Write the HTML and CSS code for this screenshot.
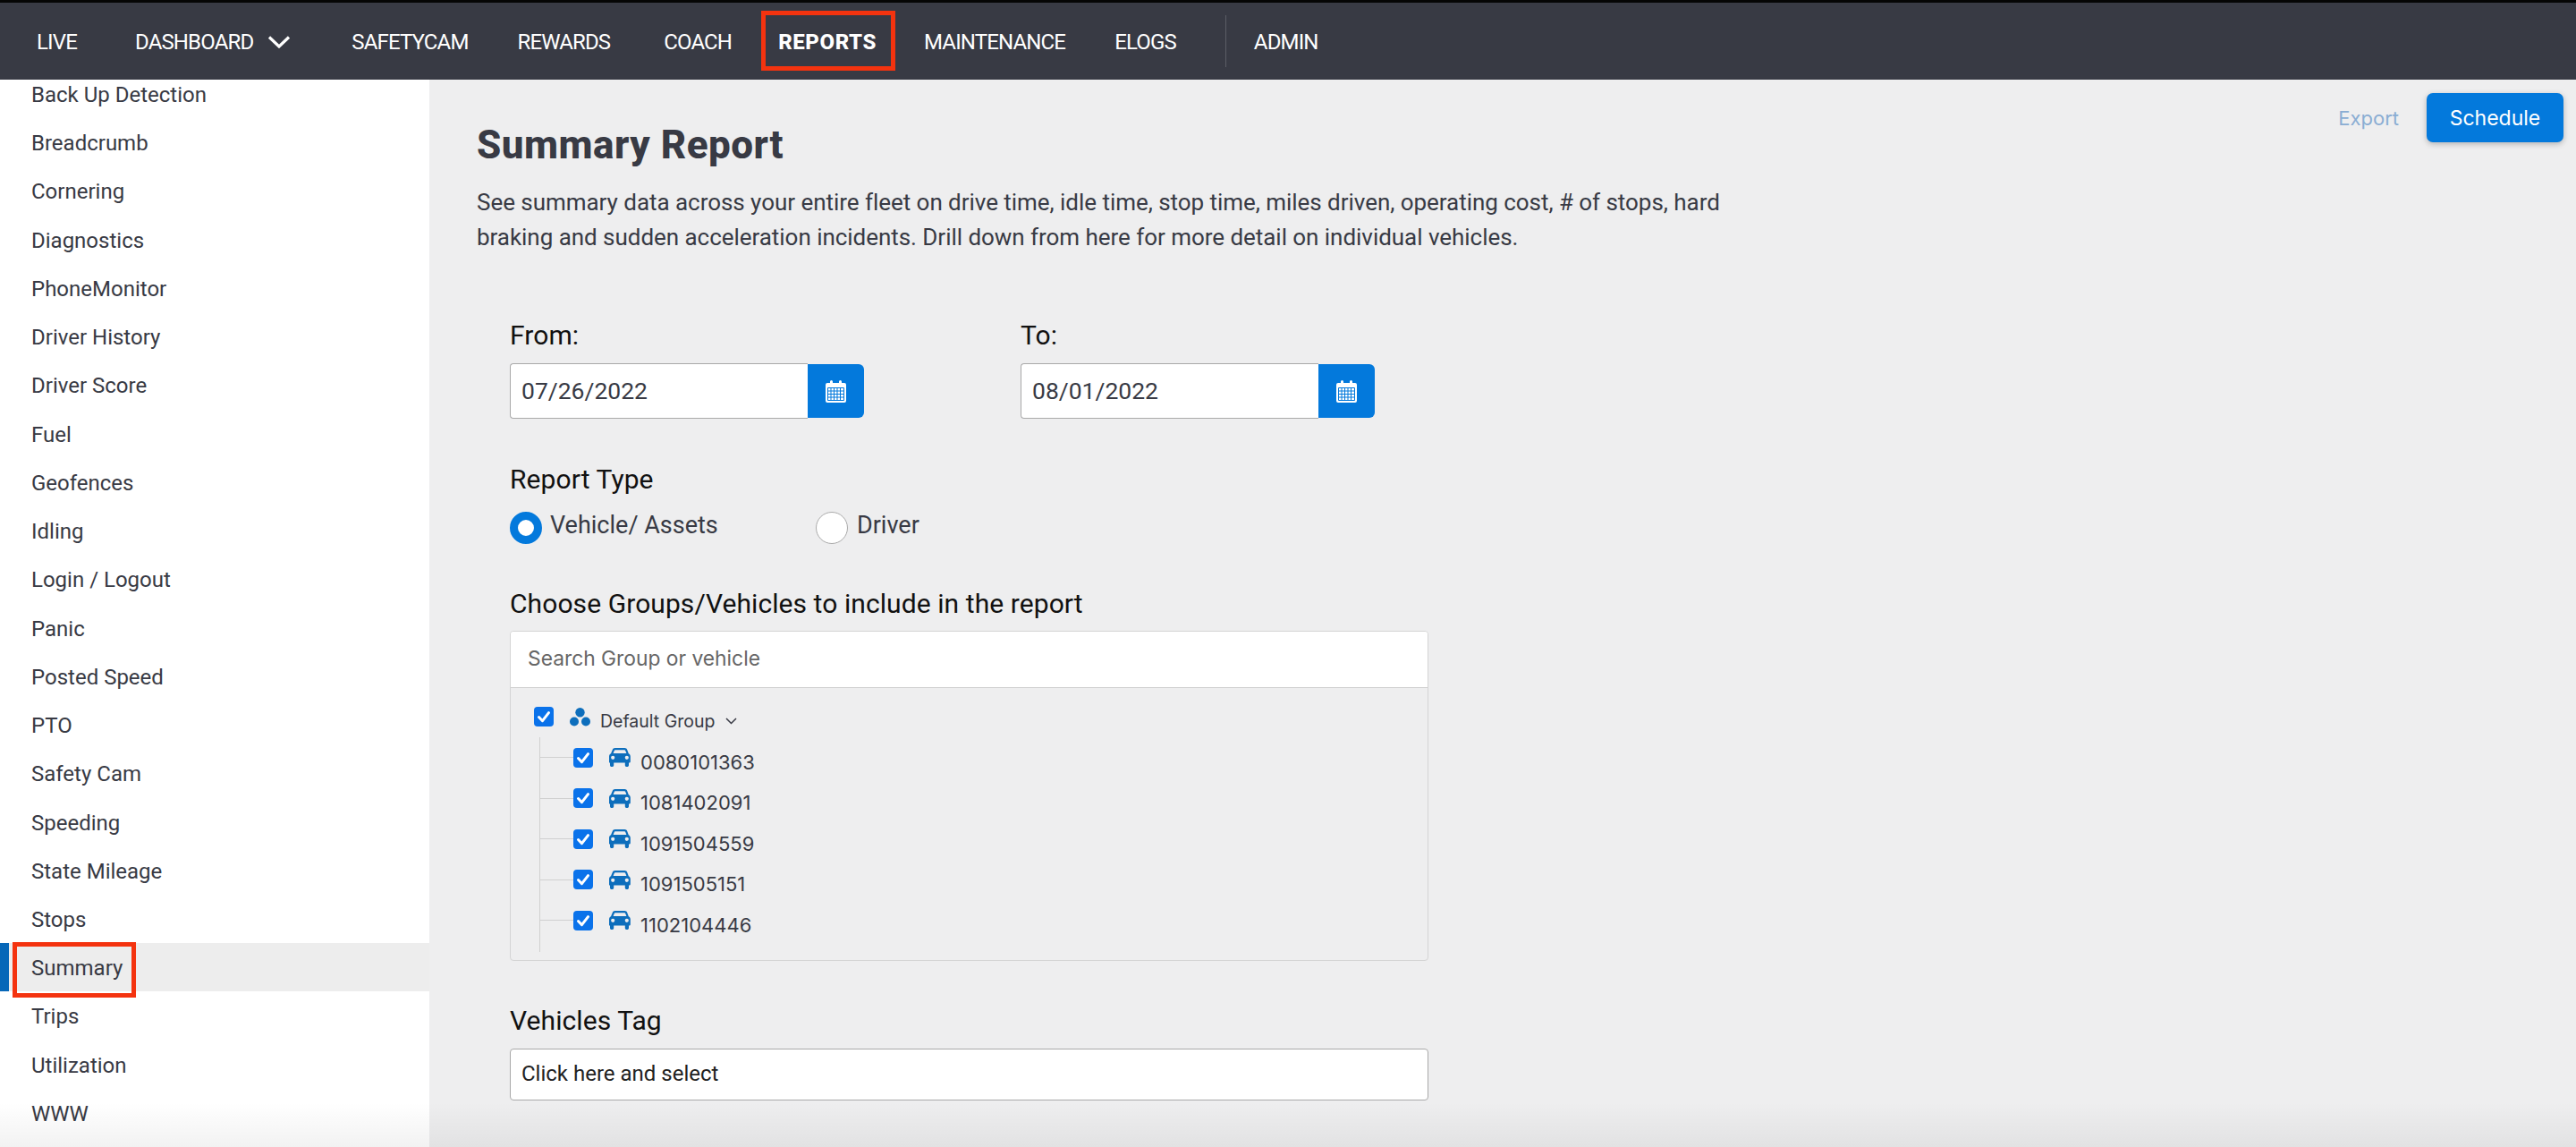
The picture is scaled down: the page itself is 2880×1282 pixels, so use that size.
FILE: index.html
```html
<!DOCTYPE html>
<html lang="en">
<head>
<meta charset="utf-8">
<title>Summary Report</title>
<link rel="stylesheet" href="styles.css">
</head>
<body>
<svg class="defs" width="0" height="0" aria-hidden="true">
  <symbol id="check" viewBox="0 0 22 22"><path d="M5.5 11.5l4 4.2 7-9" fill="none" stroke="#fff" stroke-width="3" stroke-linecap="round" stroke-linejoin="round"/></symbol>
  <symbol id="car" viewBox="0 0 24 21"><path fill-rule="evenodd" d="M6.6 0h10.8c1.3 0 2.3.7 2.8 1.9l1.6 4.4c1.2.6 2 1.8 2 3.2v5.7c0 .8-.6 1.4-1.4 1.4h-.4v2.6c0 1-.8 1.8-1.8 1.8h-.6c-1 0-1.8-.8-1.8-1.8v-2.6H5.2v2.6c0 1-.8 1.8-1.8 1.8h-.6c-1 0-1.8-.8-1.8-1.8v-2.6h-.4C-.2 16.600 0 16 0 15.200V9.500c0-1.400.8-2.600 2-3.200l1.800-4.400C4.300.7 5.300 0 6.600 0zM6.800 2.200c-.5 0-.9.300-1 .7L4.600 6.100h14.800l-1.200-3.200c-.1-.4-.5-.7-1-.7H6.800zM4.200 8.700a2.100 2.100 0 1 0 0 4.200 2.100 2.100 0 0 0 0-4.200zm15.600 0a2.100 2.100 0 1 0 0 4.200 2.100 2.100 0 0 0 0-4.200z"/></symbol>
  <symbol id="cal" viewBox="0 0 23 26"><path fill="#fff" d="M2 4h3V2.500a1.500 1.500 0 0 1 3 0V4h7V2.500a1.500 1.500 0 0 1 3 0V4h3a2 2 0 0 1 2 2v18a2 2 0 0 1-2 2H2a2 2 0 0 1-2-2V6a2 2 0 0 1 2-2z"/><path fill="none" stroke="#0379dc" stroke-width="1" d="M2.500 9.500h18v14h-18zM2.500 13h18M2.500 16.500h18M2.500 20h18M6 9.500v14M9.500 9.500v14M13 9.500v14M16.500 9.500v14"/></symbol>
</svg>

<header class="topbar">
  <a class="nav-item nav-live">LIVE</a>
  <a class="nav-item nav-dash">DASHBOARD
    <svg class="nav-chevron" viewBox="0 0 26 14" width="26" height="14"><path d="M2 1.500l11 10.500L24 1.500" fill="none" stroke="#fff" stroke-width="3.200"/></svg>
  </a>
  <a class="nav-item">SAFETYCAM</a>
  <a class="nav-item nav-rewards">REWARDS</a>
  <a class="nav-item nav-coach">COACH</a>
  <a class="nav-item nav-reports">REPORTS<span class="redbox redbox-nav"></span></a>
  <a class="nav-item">MAINTENANCE</a>
  <a class="nav-item">ELOGS</a>
  <span class="nav-divider"></span>
  <a class="nav-item">ADMIN</a>
</header>

<div class="body-row">
  <aside class="sidebar">
    <ul class="side-list">
      <li class="side-item">Back Up Detection</li>
      <li class="side-item">Breadcrumb</li>
      <li class="side-item">Cornering</li>
      <li class="side-item">Diagnostics</li>
      <li class="side-item">PhoneMonitor</li>
      <li class="side-item">Driver History</li>
      <li class="side-item">Driver Score</li>
      <li class="side-item">Fuel</li>
      <li class="side-item">Geofences</li>
      <li class="side-item">Idling</li>
      <li class="side-item">Login / Logout</li>
      <li class="side-item">Panic</li>
      <li class="side-item">Posted Speed</li>
      <li class="side-item">PTO</li>
      <li class="side-item">Safety Cam</li>
      <li class="side-item">Speeding</li>
      <li class="side-item">State Mileage</li>
      <li class="side-item">Stops</li>
      <li class="side-item side-active">Summary<span class="redbox redbox-side"></span></li>
      <li class="side-item">Trips</li>
      <li class="side-item">Utilization</li>
      <li class="side-item">WWW</li>
    </ul>
  </aside>

  <main class="content">
    <div class="page-head">
      <div class="page-intro">
        <h1 class="page-title">Summary Report</h1>
        <p class="page-desc">See summary data across your entire fleet on drive time, idle time, stop time, miles driven, operating cost, # of stops, hard<br>braking and sudden acceleration incidents. Drill down from here for more detail on individual vehicles.</p>
      </div>
      <div class="page-actions">
        <a class="export-link">Export</a>
        <button class="schedule-btn" type="button">Schedule</button>
      </div>
    </div>

    <form class="report-form">
      <div class="date-row">
        <div class="date-col">
          <div class="field-label">From:</div>
          <div class="date-field">
            <div class="date-input">07/26/2022</div>
            <div class="date-btn"><svg width="23" height="26"><use href="#cal"/></svg></div>
          </div>
        </div>
        <div class="date-col">
          <div class="field-label">To:</div>
          <div class="date-field">
            <div class="date-input">08/01/2022</div>
            <div class="date-btn"><svg width="23" height="26"><use href="#cal"/></svg></div>
          </div>
        </div>
      </div>

      <div class="field-label label-spaced">Report Type</div>
      <div class="radio-row">
        <div class="radio-opt radio-opt-first"><span class="radio radio-on"></span><span class="radio-text">Vehicle/ Assets</span></div>
        <div class="radio-opt"><span class="radio"></span><span class="radio-text">Driver</span></div>
      </div>

      <div class="field-label label-spaced">Choose Groups/Vehicles to include in the report</div>
      <div class="tree-panel">
        <div class="tree-search">Search Group or vehicle</div>
        <div class="tree-body">
          <div class="tree-group">
            <span class="cb"><svg width="22" height="22"><use href="#check"/></svg></span>
            <svg class="group-icon" viewBox="0 0 23 21" width="23" height="21"><circle cx="11.500" cy="5.200" r="5.200"/><circle cx="5" cy="15.500" r="5"/><circle cx="18" cy="15.500" r="5"/></svg>
            <span class="group-name">Default Group</span>
            <svg class="group-chevron" viewBox="0 0 13 8" width="13" height="8"><path d="M1 1l5.500 5.500L12 1" fill="none" stroke="#383a44" stroke-width="1.500"/></svg>
          </div>
          <ul class="tree-list">
            <li class="tree-row"><span class="branch"></span><span class="cb"><svg width="22" height="22"><use href="#check"/></svg></span><svg class="car-icon" width="24" height="21"><use href="#car"/></svg><span class="veh-id">0080101363</span></li>
            <li class="tree-row"><span class="branch"></span><span class="cb"><svg width="22" height="22"><use href="#check"/></svg></span><svg class="car-icon" width="24" height="21"><use href="#car"/></svg><span class="veh-id">1081402091</span></li>
            <li class="tree-row"><span class="branch"></span><span class="cb"><svg width="22" height="22"><use href="#check"/></svg></span><svg class="car-icon" width="24" height="21"><use href="#car"/></svg><span class="veh-id">1091504559</span></li>
            <li class="tree-row"><span class="branch"></span><span class="cb"><svg width="22" height="22"><use href="#check"/></svg></span><svg class="car-icon" width="24" height="21"><use href="#car"/></svg><span class="veh-id">1091505151</span></li>
            <li class="tree-row"><span class="branch"></span><span class="cb"><svg width="22" height="22"><use href="#check"/></svg></span><svg class="car-icon" width="24" height="21"><use href="#car"/></svg><span class="veh-id">1102104446</span></li>
          </ul>
        </div>
      </div>

      <div class="field-label label-spaced">Vehicles Tag</div>
      <div class="tag-input">Click here and select</div>
    </form>
  </main>
</div>
<div class="bottom-fade"></div>
</body>
</html>
```

FILE: styles.css
```css
* { box-sizing: border-box; }
html, body { margin: 0; padding: 0; height: 100%; }
body {
  height: 1282px;
  overflow: hidden;
  display: flex;
  flex-direction: column;
  position: relative;
  background: #eeeeef;
  color: #383a44;
  font-family: Roboto, "Liberation Sans", sans-serif;
}
.defs { position: absolute; }

/* top bar */
.topbar {
  flex: none;
  height: 89px;
  border-top: 3px solid #050505;
  background: #383a44;
  display: flex;
  align-items: center;
  padding-left: 41px;
}
.nav-item {
  position: relative;
  display: flex;
  align-items: center;
  color: #fff;
  font-size: 24px;
  line-height: 30px;
  letter-spacing: -0.85px;
  margin: 1px 55px 0 0;
}
.nav-live { margin-right: 65px; }
.nav-dash { margin-right: 68px; }
.nav-chevron { margin-left: 16px; }
.nav-rewards { margin-right: 60px; }
.nav-coach { margin-right: 52px; }
.nav-reports { font-weight: 800; letter-spacing: 0.6px; margin-right: 53px; }
.nav-divider {
  width: 1px;
  height: 58px;
  background: #5b5d66;
  margin-right: 31px;
}
.redbox {
  position: absolute;
  border: 5px solid #f4330f;
  pointer-events: none;
}
.redbox-nav { left: -19px; right: -21px; top: -20px; height: 67px; }
.redbox-side { left: 14px; top: -1px; width: 138px; height: 62px; }

/* layout */
.body-row { flex: 1; display: flex; min-height: 0; }

/* sidebar */
.sidebar {
  flex: none;
  width: 480px;
  background: #fff;
  overflow: hidden;
}
.side-list { list-style: none; margin: -11px 0 0; padding: 0; }
.side-item {
  position: relative;
  height: 54.24px;
  line-height: 57px;
  padding-left: 35px;
  font-size: 24px;
}
.side-active {
  background: #ededed;
  box-shadow: inset 10px 0 0 #0667b8;
}

/* content */
.content { flex: 1; min-width: 0; padding: 48px 14px 0 53px; }
.page-head { display: flex; justify-content: space-between; align-items: flex-start; }
.page-title {
  margin: 0;
  font-size: 44px;
  line-height: 50px;
  font-weight: 800;
  letter-spacing: 0.5px;
}
.page-desc {
  margin: 20px 0 0;
  font-size: 26px;
  line-height: 39px;
  letter-spacing: -0.04px;
}
.page-actions {
  display: flex;
  align-items: center;
  margin-top: -33px;
}
.export-link {
  font-family: Inter, sans-serif;
  font-size: 22px;
  color: #8aadd3;
  margin-right: 31px;
}
.schedule-btn {
  width: 153px;
  height: 55px;
  border: 0;
  border-radius: 7px;
  background: #0379dc;
  color: #fff;
  font-family: Inter, sans-serif;
  font-size: 23px;
  box-shadow: 0 2px 6px rgba(0, 0, 0, .25);
}

/* form */
.report-form { margin: 72px 0 0 37px; width: 1027px; }
.date-row { display: flex; }
.date-col { flex: none; width: 571px; }
.field-label {
  font-size: 30px;
  line-height: 36px;
  color: #111;
  letter-spacing: 0.08px;
}
.label-spaced { margin-top: 49px; }
.date-field { display: flex; align-items: center; width: 396px; margin-top: 13px; }
.date-input {
  flex: none;
  width: 333px;
  height: 62px;
  background: #fff;
  border: 1px solid #a9a9a9;
  border-right: 0;
  border-radius: 4px 0 0 4px;
  padding-left: 12px;
  font-size: 26.500px;
  line-height: 60px;
}
.date-btn {
  flex: none;
  width: 63px;
  height: 60px;
  background: #0379dc;
  border-radius: 0 6px 6px 0;
  display: flex;
  align-items: center;
  justify-content: center;
}
.report-form .date-row + .field-label { margin-top: 50px; }

.radio-row { display: flex; margin-top: 18px; height: 36px; }
.radio-opt { display: flex; align-items: center; font-size: 27px; line-height: 30px; }
.radio-opt-first { flex: none; width: 342px; }
.radio-text { margin-bottom: 6px; }
.radio {
  flex: none;
  width: 36px;
  height: 36px;
  border-radius: 50%;
  background: #fff;
  border: 1px solid #aaa;
  margin-right: 10px;
}
.radio-on { border: 9px solid #0379dc; margin-right: 9px; }

.tree-panel {
  margin-top: 12px;
  height: 369px;
  border: 1px solid #d4d4d4;
  border-radius: 4px;
  overflow: hidden;
}
.tree-search {
  height: 63px;
  background: #fff;
  border-bottom: 1px solid #d0d0d0;
  padding-left: 19px;
  font-family: Inter, sans-serif;
  font-size: 22.800px;
  line-height: 60px;
  color: #666;
}
.tree-body { padding: 21px 0 0 26px; }
.tree-group { display: flex; align-items: center; height: 22px; }
.cb {
  flex: none;
  width: 22px;
  height: 22px;
  border-radius: 4px;
  background: #0a72ea;
  display: block;
}
.cb svg { display: block; }
.group-icon { flex: none; margin-left: 18px; fill: #0d6ebc; }
.group-name {
  margin-left: 11px;
  padding-top: 10px;
  font-family: Inter, sans-serif;
  font-size: 19.500px;
  white-space: nowrap;
}
.group-chevron { margin: 10px 0 0 12px; }
.tree-list {
  list-style: none;
  margin: 12px 0 0 6px;
  padding: 0 0 12.500px;
  border-left: 1px solid #d0d0d0;
}
.tree-row { display: flex; align-items: center; height: 45.500px; }
.branch { flex: none; width: 37px; height: 1px; background: #d0d0d0; }
.car-icon { flex: none; margin-left: 18px; fill: #0d6ebc; }
.veh-id {
  margin-left: 11px;
  padding-top: 10px;
  font-family: Inter, sans-serif;
  font-size: 22px;
}
.tag-input {
  margin-top: 13px;
  height: 58px;
  background: #fff;
  border: 1px solid #a9a9a9;
  border-radius: 4px;
  padding-left: 12px;
  font-size: 24px;
  line-height: 55px;
  color: #222;
}

.bottom-fade {
  position: absolute;
  left: 0;
  right: 0;
  bottom: 0;
  height: 50px;
  background: linear-gradient(rgba(0, 0, 0, 0), rgba(0, 0, 0, .05));
  pointer-events: none;
}
```
